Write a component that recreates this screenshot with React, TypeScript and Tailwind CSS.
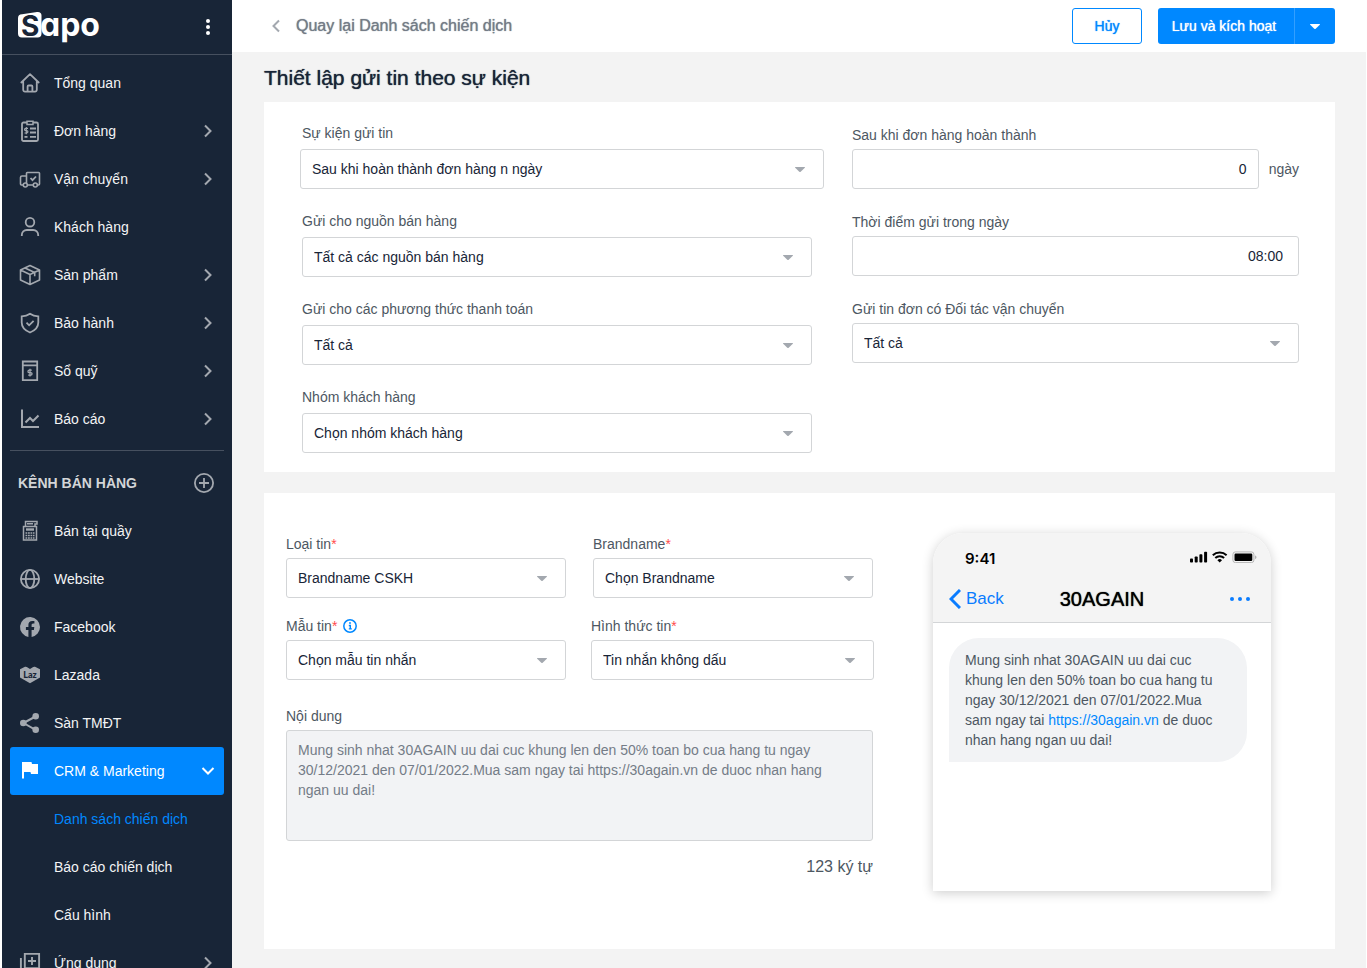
import { useState } from "react";
import type { ReactNode } from "react";
import clsx from "clsx";

type IconProps = { children: ReactNode; fill?: boolean };

function Icon({ children, fill }: IconProps) {
  return (
    <svg
      viewBox="0 0 24 24"
      className="w-6 h-6 shrink-0"
      fill={fill ? "currentColor" : "none"}
      stroke={fill ? "none" : "currentColor"}
      strokeWidth={1.8}
      aria-hidden="true"
    >
      {children}
    </svg>
  );
}

const ICONS: Record<string, ReactNode> = {
  home: (
    <Icon>
      <path d="M3.300 11.500 12 3.200l8.700 8.300M5.200 10v8.800a1.800 1.800 0 0 0 1.800 1.800h10a1.800 1.800 0 0 0 1.800-1.800V10M9.600 20.500v-5a1 1 0 0 1 1-1h2.800a1 1 0 0 1 1 1v5" strokeLinejoin="round" strokeLinecap="round" />
    </Icon>
  ),
  orders: (
    <Icon>
      <rect x="4" y="3.500" width="16" height="18.500" rx="1.500" />
      <path d="M9 2.200h6v3.300H9z" fill="#182537" strokeWidth={1.500} />
      <path d="M12 9.500h6M12 13.500h6M12 17.800h6M6.500 17.800h3" />
      <path d="M10 9.300H7.700a1 1 0 0 0 0 2.300h1a1 1 0 0 1 0 2.400H6.500M8.300 8v7.300" strokeWidth={1.200} />
    </Icon>
  ),
  truck: (
    <Icon>
      <path d="M5 18H3.500A1 1 0 0 1 2.500 17v-6.500a1.500 1.500 0 0 1 1.500-1.500h4.500M9.600 18h5.400M8.500 16V6.300a.8.8 0 0 1 .8-.8h11.400a.8.8 0 0 1 .8.8v10.700a1 1 0 0 1-1 1h-.9" strokeWidth={1.600} />
      <circle cx="7.300" cy="18" r="2" strokeWidth={1.600} />
      <circle cx="17.300" cy="18" r="2" strokeWidth={1.600} />
      <path d="m12.500 11 2 2.200 3.500-3.700" />
    </Icon>
  ),
  user: (
    <Icon>
      <circle cx="12" cy="7.200" r="4.300" />
      <path d="M3.800 21v-1a5 5 0 0 1 5-5h6.400a5 5 0 0 1 5 5v1" />
    </Icon>
  ),
  box: (
    <Icon>
      <path d="M12 2.500 21.500 7v10L12 21.500 2.500 17V7zM2.500 7 12 11.500 21.500 7M12 11.500v10M7 4.900l9.700 4.500v3.800" strokeLinejoin="round" strokeWidth={1.600} />
    </Icon>
  ),
  shield: (
    <Icon>
      <path d="M12 2.800c2.500 1.700 5.300 2.400 8.300 2.500v6.200c0 4.500-3.300 8-8.300 10-5-2-8.300-5.500-8.300-10V5.300c3-.1 5.800-.8 8.300-2.500z" />
      <path d="m8.500 11.700 2.600 2.600 4.500-4.500" />
    </Icon>
  ),
  ledger: (
    <Icon>
      <path d="M4.800 2.500h14.400v18.700H4.800zM4.800 6.300h14.400" />
      <path d="M13.800 11.200h-2.600a1.100 1.100 0 0 0 0 2.400h1.600a1.100 1.100 0 0 1 0 2.500h-2.600M12 9.800v7.700" strokeWidth={1.300} />
    </Icon>
  ),
  chart: (
    <Icon>
      <path d="M4 2.500v17.500h17" strokeWidth={2} />
      <path d="m7.500 15.500 4.500-4.500 3 3 5.500-5.500" strokeWidth={2} />
    </Icon>
  ),
  pos: (
    <Icon>
      <path d="M5.500 7.500h13v13.500h-13zM7.500 7.500v-5h11.500v2.500h-2v2.500M9 4.800h6" strokeWidth={1.500} />
      <path d="M8 10.500h8" strokeWidth={2.400} />
      <path d="M7.500 14h9M7.500 16.500h9M7.500 19h9" strokeWidth={1.500} strokeDasharray="1.800 0.700" />
    </Icon>
  ),
  globe: (
    <Icon>
      <circle cx="12" cy="12" r="9.100" />
      <ellipse cx="12" cy="12" rx="4.300" ry="9.100" />
      <path d="M2.700 12h18.600" />
    </Icon>
  ),
  facebook: (
    <Icon fill>
      <path d="M22 12a10 10 0 1 0-11.600 9.900v-7H7.900V12h2.500V9.800c0-2.500 1.500-3.900 3.800-3.900 1.100 0 2.200.2 2.200.2v2.500h-1.200c-1.200 0-1.600.8-1.600 1.500V12h2.700l-.4 2.900h-2.300v7A10 10 0 0 0 22 12z" />
    </Icon>
  ),
  lazada: (
    <Icon fill>
      <path d="M2 6.200 7 3.800q1-.3 1.800.3L12 6l3.200-1.900q.8-.6 1.800-.3l5 2.400v8.300L12 20.300 2 14.500z" />
      <text x="12" y="14.500" textAnchor="middle" className="fill-[#182537] font-['Lato'] text-[9px] font-black">
        Laz
      </text>
    </Icon>
  ),
  share: (
    <Icon fill>
      <path d="m5.500 12 12-6.500M5.500 12l12 6.800" stroke="currentColor" strokeWidth={2} />
      <circle cx="5.300" cy="12" r="3.300" />
      <circle cx="17.700" cy="5.300" r="3.300" />
      <circle cx="17.700" cy="18.800" r="3.300" />
    </Icon>
  ),
  flag: (
    <Icon fill>
      <path d="M4 3h9.500l.5 2h6v10h-7l-.5-2H6v6.500H4z" />
    </Icon>
  ),
  apps: (
    <Icon>
      <path d="M6.800 2.900h14.300v14.200H6.800zM2.900 7v14.200H17M14 6v8M10 10h8" strokeWidth={1.900} />
    </Icon>
  ),
};

type NavItem = { label: string; icon: string; expandable?: boolean };

const MAIN_NAV: NavItem[] = [
  { label: "Tổng quan", icon: "home" },
  { label: "Đơn hàng", icon: "orders", expandable: true },
  { label: "Vận chuyển", icon: "truck", expandable: true },
  { label: "Khách hàng", icon: "user" },
  { label: "Sản phẩm", icon: "box", expandable: true },
  { label: "Bảo hành", icon: "shield", expandable: true },
  { label: "Sổ quỹ", icon: "ledger", expandable: true },
  { label: "Báo cáo", icon: "chart", expandable: true },
];

const CHANNELS: NavItem[] = [
  { label: "Bán tại quầy", icon: "pos" },
  { label: "Website", icon: "globe" },
  { label: "Facebook", icon: "facebook" },
  { label: "Lazada", icon: "lazada" },
  { label: "Sàn TMĐT", icon: "share" },
];

const CRM_LINKS = ["Danh sách chiến dịch", "Báo cáo chiến dịch", "Cấu hình"];

const MESSAGE =
  "Mung sinh nhat 30AGAIN uu dai cuc khung len den 50% toan bo cua hang tu ngay 30/12/2021 den 07/01/2022.Mua sam ngay tai https://30again.vn de duoc nhan hang ngan uu dai!";

// stands in for a medium weight, which the font does not have
const MEDIUM = "[text-shadow:0_0_1px_currentColor]";

function Chevron({ down }: { down?: boolean }) {
  return (
    <svg viewBox="0 0 16 16" className="w-4 h-4 shrink-0" fill="none" stroke="currentColor" strokeWidth={2} aria-hidden="true">
      <path d={down ? "m2.500 5 5.500 5.500L13.500 5" : "m5 2.500 5.500 5.500L5 13.500"} />
    </svg>
  );
}

function Caret({ className }: { className?: string }) {
  return (
    <svg viewBox="0 0 10 5" className={clsx("w-[10px] h-[5px]", className)} fill="currentColor" aria-hidden="true">
      <path d="M0.500 0h9q.8.100.3.700L5.700 4.700q-.7.600-1.400 0L.2.700Q-.3.100.5 0z" />
    </svg>
  );
}

function Logo() {
  return (
    <svg viewBox="0 0 96 44" className="w-24 h-11" role="img" aria-label="Sapo">
      <path d="M4 9.300 19 7q4.500-.4 4.500 3.500V28.500a4 4 0 0 1-4 4H4a4 4 0 0 1-4-4V13.300a4 4 0 0 1 4-4z" fill="#fff" />
      <text x="3" y="31" className="fill-[#182537] font-['Inter'] text-[28px] font-bold">
        S
      </text>
      <text x="22" y="31" className="fill-white font-['Inter'] text-[32px] font-bold [font-feature-settings:'cv11']">
        apo
      </text>
    </svg>
  );
}

function NavRow({ item }: { item: NavItem }) {
  return (
    <li>
      <a href="#" className="flex items-center h-12 px-4 text-sm text-[#f3f4f5]">
        <span className="text-[#a3a8af]">{ICONS[item.icon]}</span>
        <span className="ml-3 flex-1">{item.label}</span>
        {item.expandable && (
          <span className="text-[#a3a8af]">
            <Chevron />
          </span>
        )}
      </a>
    </li>
  );
}

function Sidebar() {
  return (
    <aside className="w-[230px] h-screen sticky top-0 shrink-0 overflow-hidden bg-[#182537]">
      <div className="flex items-center justify-between h-[55px] px-4 border-b border-[#46505f]">
        <Logo />
        <button type="button" aria-label="Menu" className="text-white">
          <svg viewBox="0 0 16 16" className="w-4 h-4" fill="currentColor">
            <circle cx="8" cy="2" r="2" />
            <circle cx="8" cy="8" r="2" />
            <circle cx="8" cy="14" r="2" />
          </svg>
        </button>
      </div>
      <nav>
        <ul className="pt-1">
          {MAIN_NAV.map((item) => (
            <NavRow key={item.label} item={item} />
          ))}
        </ul>
        <hr className="mx-2 mt-[7px] mb-2 border-[#46505f]" />
        <div className="flex items-center justify-between h-12 px-4">
          <h2 className="text-sm font-bold text-[#d3d5d7]">KÊNH BÁN HÀNG</h2>
          <button type="button" aria-label="Thêm kênh bán hàng" className="text-[#a3a8af]">
            <Icon>
              <circle cx="12" cy="12" r="9.100" />
              <path d="M12 7v10M7 12h10" />
            </Icon>
          </button>
        </div>
        <ul>
          {CHANNELS.map((item) => (
            <NavRow key={item.label} item={item} />
          ))}
          <li>
            <a href="#" className="flex items-center h-12 mx-2 px-2 rounded-[3px] bg-[#0088ff] text-sm text-white">
              {ICONS.flag}
              <span className="ml-3 flex-1">CRM &amp; Marketing</span>
              <Chevron down />
            </a>
            <ul>
              {CRM_LINKS.map((label, i) => (
                <li key={label}>
                  <a href="#" className={clsx("flex items-center h-12 pl-[52px] text-sm", i === 0 ? "text-[#0088ff]" : "text-[#f3f4f5]")}>
                    {label}
                  </a>
                </li>
              ))}
            </ul>
          </li>
          <NavRow item={{ label: "Ứng dụng", icon: "apps", expandable: true }} />
        </ul>
      </nav>
    </aside>
  );
}

type FieldProps = {
  id: string;
  label: string;
  required?: boolean;
  hint?: ReactNode;
  labelClass?: string;
  children: ReactNode;
};

function Field({ id, label, required, hint, labelClass = "mb-1", children }: FieldProps) {
  return (
    <div>
      <div className={clsx("flex items-center gap-[6px] h-5", labelClass)}>
        <label htmlFor={id} className="text-sm leading-5 text-[#4d5762]">
          {label}
          {required && <span className="text-[#ff4d4d]">*</span>}
        </label>
        {hint}
      </div>
      {children}
    </div>
  );
}

function SelectBox({ id, options, className }: { id: string; options: string[]; className?: string }) {
  return (
    <div className={clsx("relative", className)}>
      <select id={id} className="block w-full h-10 pl-[11px] pr-10 appearance-none rounded-[3px] border border-[#d3d5d7] bg-white text-sm text-[#182537]">
        {options.map((o) => (
          <option key={o}>{o}</option>
        ))}
      </select>
      <Caret className="absolute right-[19px] top-[18px] text-[#a3a8af] pointer-events-none" />
    </div>
  );
}

const INPUT = "block w-full h-10 rounded-[3px] border border-[#d3d5d7] bg-white text-sm text-right text-[#182537]";

function EventCard() {
  const [days, setDays] = useState("0");
  const [time, setTime] = useState("08:00");

  return (
    <section className="grid grid-cols-[510fr_447fr] gap-10 bg-white pl-[38px] pr-9 pt-[21px] pb-[19px]">
      <div className="flex flex-col gap-[22px]">
        <Field id="event" label="Sự kiện gửi tin" labelClass="mb-[6px]">
          <SelectBox id="event" options={["Sau khi hoàn thành đơn hàng n ngày"]} className="-ml-[2px] -mr-3" />
        </Field>
        <Field id="source" label="Gửi cho nguồn bán hàng" labelClass="mb-[6px]">
          <SelectBox id="source" options={["Tất cả các nguồn bán hàng"]} />
        </Field>
        <Field id="payment" label="Gửi cho các phương thức thanh toán" labelClass="mb-[6px]">
          <SelectBox id="payment" options={["Tất cả"]} />
        </Field>
        <Field id="group" label="Nhóm khách hàng" labelClass="mb-[6px]">
          <SelectBox id="group" options={["Chọn nhóm khách hàng"]} />
        </Field>
      </div>
      <div className="flex flex-col gap-[23px] pt-[2px]">
        <Field id="days" label="Sau khi đơn hàng hoàn thành">
          <div className="flex items-center gap-[10px]">
            <input id="days" value={days} onChange={(e) => setDays(e.target.value)} className={clsx(INPUT, "flex-1 min-w-0 px-[11px]")} />
            <span className="text-sm text-[#4d5762]">ngày</span>
          </div>
        </Field>
        <Field id="time" label="Thời điểm gửi trong ngày">
          <input id="time" value={time} onChange={(e) => setTime(e.target.value)} className={clsx(INPUT, "px-[15px]")} />
        </Field>
        <Field id="partner" label="Gửi tin đơn có Đối tác vận chuyển">
          <SelectBox id="partner" options={["Tất cả"]} />
        </Field>
      </div>
    </section>
  );
}

function PhonePreview() {
  return (
    <div className="w-[338px] h-[358px] shrink-0 rounded-t-[30px] bg-white shadow-[0_2px_12px_rgba(0,0,0,0.2)]">
      <div className="h-[90px] rounded-t-[30px] border-b border-[#d3d5d7] bg-[#f4f4f4] pt-4">
        <div className="flex items-center justify-between pl-8 pr-[14px] h-5">
          <span className="font-['Inter'] text-[15px] font-semibold text-black">9:41</span>
          <svg viewBox="0 0 67 12" className="w-[67px] h-3 mb-1" aria-hidden="true">
            <rect x="0" y="7.500" width="3" height="4" rx="0.800" />
            <rect x="4.700" y="5.500" width="3" height="6" rx="0.800" />
            <rect x="9.400" y="3.200" width="3" height="8.300" rx="0.800" />
            <rect x="14.100" y="0.800" width="3" height="10.700" rx="0.800" />
            <g fill="none" stroke="#000" strokeWidth={2}>
              <path d="M22.800 4.300a10 10 0 0 1 13.800 0" />
              <path d="M25.300 7a6.300 6.300 0 0 1 8.800 0" />
            </g>
            <path d="M27.400 9.200a3.300 3.300 0 0 1 4.600 0l-2.300 2.400z" />
            <rect x="42.900" y="0.900" width="21" height="10.700" rx="2.500" fill="none" stroke="#b5b5b5" />
            <rect x="44.500" y="2.500" width="17.800" height="7.500" rx="1.200" />
            <path d="M65 4.500c1 .4 1.500 1 1.500 1.800s-.5 1.400-1.500 1.800z" fill="#b5b5b5" />
          </svg>
        </div>
        <div className="grid grid-cols-3 items-center mt-[14px] h-8 px-4">
          <a href="#" className="flex items-center gap-[5px] text-[17px] text-[#0a7cff]">
            <svg viewBox="0 0 12 20" className="w-3 h-5" fill="none" stroke="currentColor" strokeWidth={3} aria-hidden="true">
              <path d="M11 1 2 10l9 9" />
            </svg>
            Back
          </a>
          <h3 className={clsx("text-center text-xl text-black", MEDIUM)}>30AGAIN</h3>
          <button type="button" aria-label="Tùy chọn" className="justify-self-end mr-1 text-[#0a7cff]">
            <svg viewBox="0 0 22 4" className="w-[22px] h-1" fill="currentColor">
              <circle cx="3" cy="2" r="2" />
              <circle cx="11" cy="2" r="2" />
              <circle cx="19" cy="2" r="2" />
            </svg>
          </button>
        </div>
      </div>
      <p className="ml-4 mr-6 mt-[15px] px-4 py-3 rounded-[30px] rounded-bl-none bg-[#f2f3f5] text-sm leading-5 text-[#4d5762]">
        Mung sinh nhat 30AGAIN uu dai cuc khung len den 50% toan bo cua hang tu ngay 30/12/2021 den 07/01/2022.Mua sam
        ngay tai{" "}
        <a href="#" className="text-[#0088ff]">
          https://30again.vn
        </a>{" "}
        de duoc nhan hang ngan uu dai!
      </p>
    </div>
  );
}

function MessageCard() {
  return (
    <section className="flex items-start gap-[60px] mt-[21px] bg-white pl-[22px] pr-16 pt-10 pb-[58px]">
      <div className="flex-1 min-w-0 pt-px">
        <div className="grid grid-cols-2 gap-x-[27px] gap-y-[18px]">
          <Field id="type" label="Loại tin" required>
            <SelectBox id="type" options={["Brandname CSKH"]} />
          </Field>
          <Field id="brand" label="Brandname" required>
            <SelectBox id="brand" options={["Chọn Brandname"]} />
          </Field>
          <Field
            id="template"
            label="Mẫu tin"
            required
            hint={
              <svg viewBox="0 0 14 14" className="w-[14px] h-[14px] text-[#0088ff]" fill="none" stroke="currentColor" aria-hidden="true">
                <circle cx="7" cy="7" r="6.200" strokeWidth={1.500} />
                <path d="M5.800 6.500h1.500v3.200M5.800 9.900h3" strokeWidth={1.400} />
                <circle cx="7" cy="4" r="0.900" fill="currentColor" stroke="none" />
              </svg>
            }
          >
            <SelectBox id="template" options={["Chọn mẫu tin nhắn"]} />
          </Field>
          <div className="-ml-[2px] -mr-px">
            <Field id="format" label="Hình thức tin" required>
              <SelectBox id="format" options={["Tin nhắn không dấu"]} />
            </Field>
          </div>
        </div>
        <div className="mt-[26px]">
          <Field id="content" label="Nội dung">
            <textarea
              id="content"
              readOnly
              value={MESSAGE}
              className="block w-full h-[111px] pl-[11px] pr-8 py-[9px] resize-none rounded-[3px] border border-[#d3d5d7] bg-[#f2f3f5] text-sm leading-5 text-[#747c87]"
            />
          </Field>
        </div>
        <p className="mt-[14px] text-right text-base text-[#4d5762]">123 ký tự</p>
      </div>
      <PhonePreview />
    </section>
  );
}

export default function App() {
  return (
    <div className="flex min-h-screen bg-white pl-[2px] pr-px font-['Liberation_Sans',Arial,sans-serif]">
      <Sidebar />
      <div className="flex-1 min-w-0 bg-[#f3f3f3]">
        <header className="flex items-center h-[52px] pl-9 pr-[31px] bg-white">
          <a href="#" className={clsx("flex items-center gap-3 text-base text-[#747c87]", MEDIUM)}>
            <svg viewBox="0 0 16 16" className="w-4 h-4" fill="none" stroke="#a3a8af" strokeWidth={2} aria-hidden="true">
              <path d="m11 2.500-5.500 5.500L11 13.500" />
            </svg>
            Quay lại Danh sách chiến dịch
          </a>
          <div className="flex ml-auto gap-4">
            <button type="button" className={clsx("w-[70px] h-9 rounded-[3px] border border-[#0088ff] text-sm text-[#0088ff]", MEDIUM)}>
              Hủy
            </button>
            <div className="flex h-9 rounded-[3px] bg-[#0088ff] text-white">
              <button type="button" className={clsx("w-[136px] pr-1 text-sm", MEDIUM)}>
                Lưu và kích hoạt
              </button>
              <button type="button" aria-label="Thêm lựa chọn" className="flex items-center justify-center w-[41px] border-l border-[#339fff]">
                <Caret />
              </button>
            </div>
          </div>
        </header>
        <main className="pl-8 pr-[31px] pb-[19px]">
          <h1 className={clsx("pt-3 pb-[10px] text-[21px] leading-7 text-[#182537]", MEDIUM)}>Thiết lập gửi tin theo sự kiện</h1>
          <EventCard />
          <MessageCard />
        </main>
      </div>
    </div>
  );
}
